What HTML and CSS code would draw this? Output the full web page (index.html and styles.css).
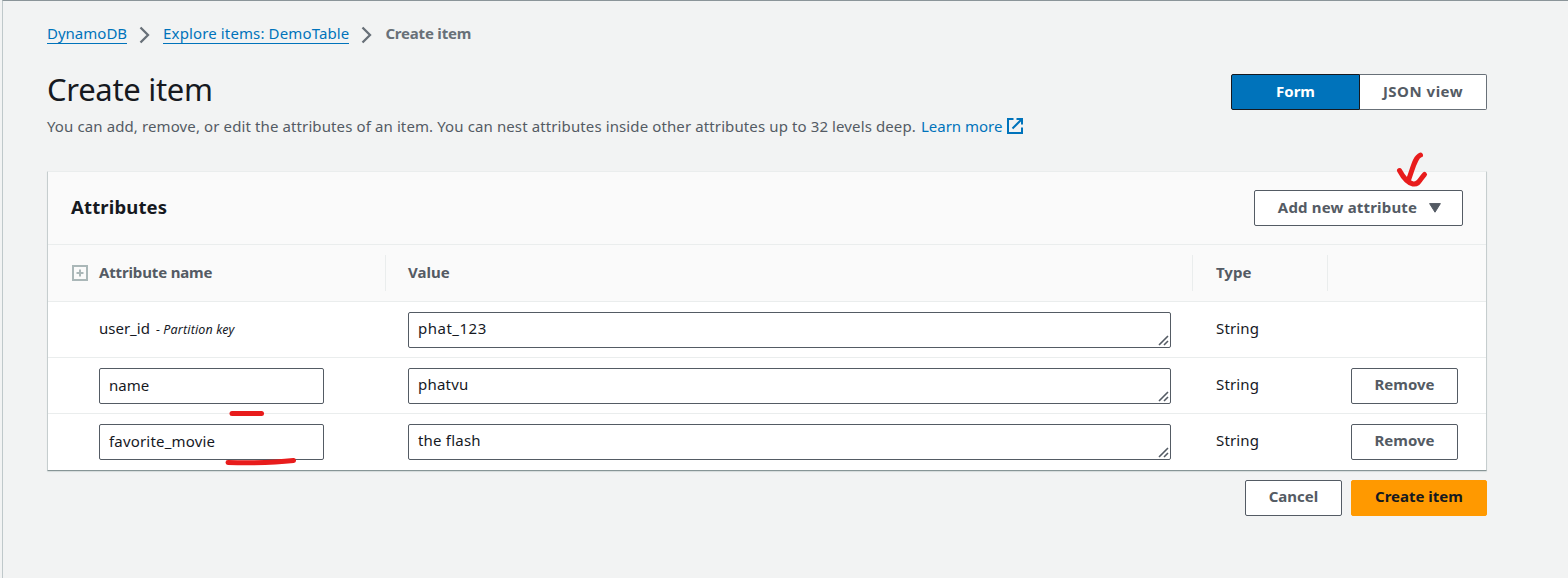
FILE: index.html
```html
<!DOCTYPE html>
<html lang="en">
<head>
<meta charset="utf-8">
<title>Create item</title>
<link rel="stylesheet" href="styles.css">
</head>
<body>
<main class="page">
  <nav class="breadcrumbs">
    <a class="crumb crumb-db">DynamoDB</a>
    <svg class="chevron" width="12" height="18" viewBox="0 0 12 18"><path d="M1.5 1.5L9 9L1.5 16.5"/></svg>
    <a class="crumb crumb-table">Explore items: DemoTable</a>
    <svg class="chevron" width="12" height="18" viewBox="0 0 12 18"><path d="M1.5 1.5L9 9L1.5 16.5"/></svg>
    <span class="crumb-current">Create item</span>
  </nav>
  <header class="page-header">
    <div>
      <h1 class="title">Create item</h1>
      <p class="subtitle"><span class="desc">You can add, remove, or edit the attributes of an item. You can nest attributes inside other attributes up to 32 levels deep.</span><a class="learn">Learn more</a><svg class="external" width="16" height="16" viewBox="0 0 16 16"><path d="M6.500 1H1V15H15V9.500M9.500 1H15V6.500M14.500 1.500L5.500 10.500"/></svg></p>
    </div>
    <div class="segmented">
      <div class="segment segment-active"><span>Form</span></div>
      <div class="segment"><span class="json">JSON view</span></div>
    </div>
  </header>
  <section class="panel">
    <header class="panel-header">
      <h2 class="panel-title">Attributes</h2>
      <div class="button button-add"><span>Add new attribute</span><svg width="12" height="10" viewBox="0 0 12 10"><path d="M.6.6H11.4L6 9.2Z" fill="#545b64" stroke="#545b64" stroke-linejoin="round"/></svg></div>
    </header>
    <div class="row row-head">
      <div class="cell head-name"><svg class="expand" width="16" height="16" viewBox="0 0 16 16"><path d="M1 1H15V15H1ZM8 4.5V11.5M4.5 8H11.5"/></svg><span class="th-name">Attribute name</span></div>
      <div class="cell"><span class="th-value">Value</span></div>
      <div class="cell"><span class="th-type">Type</span></div>
      <div class="cell"></div>
    </div>
    <div class="row">
      <div class="cell cell-name"><span class="key">user_id</span><em class="key-note">- Partition key</em></div>
      <div class="cell"><div class="field area"><span class="spaced">phat_123</span><svg class="grip" width="11" height="11" viewBox="0 0 11 11"><path d="M1 10L10 1M6 10L10 6"/></svg></div></div>
      <div class="cell"><span class="type">String</span></div>
      <div class="cell"></div>
    </div>
    <div class="row">
      <div class="cell cell-name"><div class="field"><span>name</span></div></div>
      <div class="cell"><div class="field area"><span>phatvu</span><svg class="grip" width="11" height="11" viewBox="0 0 11 11"><path d="M1 10L10 1M6 10L10 6"/></svg></div></div>
      <div class="cell"><span class="type">String</span></div>
      <div class="cell"><div class="button button-remove"><span>Remove</span></div></div>
    </div>
    <div class="row row-last">
      <div class="cell cell-name"><div class="field"><span class="movie">favorite_movie</span></div></div>
      <div class="cell"><div class="field area"><span>the flash</span><svg class="grip" width="11" height="11" viewBox="0 0 11 11"><path d="M1 10L10 1M6 10L10 6"/></svg></div></div>
      <div class="cell"><span class="type">String</span></div>
      <div class="cell"><div class="button button-remove"><span>Remove</span></div></div>
    </div>
  </section>
  <footer class="actions">
    <div class="button button-cancel"><span>Cancel</span></div>
    <div class="button button-primary"><span>Create item</span></div>
  </footer>
</main>
<svg class="ink" width="1568" height="578" viewBox="0 0 1568 578">
  <path d="M1420.500 155C1415 157 1413 168 1408.500 180"/>
  <path d="M1399.500 170.500C1403 177 1408 183 1413 184C1419 185 1420 179 1424.500 174.500"/>
  <path d="M232 413.500H261.500"/>
  <path d="M228 462.500C250 463 272 463 293.500 460.500"/>
</svg>
</body>
</html>
```
FILE: styles.css
```css
* { box-sizing: border-box; }
body {
  margin: 0;
  height: 578px;
  overflow: hidden;
  padding-left: 2px;
  background: #f2f3f3;
  font: 15px/22px "Noto Sans", "Open Sans", sans-serif;
  color: #16191f;
}
.page {
  height: 578px;
  padding: 22px 81px 0 44px;
  border-top: 1px solid #8b9599;
  border-left: 1px solid #bfc8ca;
}
span, a { white-space: nowrap; }
h1, h2, p { margin: 0; }
.breadcrumbs { display: flex; align-items: flex-start; height: 49px; }
.crumb { color: #0073bb; height: 21px; line-height: 21px; border-bottom: 1px solid #0073bb; }
.crumb-table { letter-spacing: .13px; }
.crumb-current { color: #687078; font-weight: 700; line-height: 21px; letter-spacing: -.2px; }
.chevron { margin: 3px 12px 0; fill: none; stroke: #687078; stroke-width: 2.3; }
.page-header { display: flex; justify-content: space-between; height: 99px; }
.title { font-size: 31px; line-height: 34px; font-weight: 400; letter-spacing: -.3px; }
.subtitle { display: flex; align-items: center; height: 22px; margin-top: 9px; color: #545b64; }
.desc { letter-spacing: .112px; }
.learn { color: #0073bb; margin-left: 5px; }
.external { margin-left: 5px; fill: none; stroke: #0073bb; stroke-width: 2; }
.segmented { display: flex; height: 36px; margin-top: 2px; font-weight: 700; color: #545b64; }
.segment {
  display: flex;
  justify-content: center;
  width: 127px;
  padding-top: 5px;
  background: #fff;
  border: 1px solid #687078;
  border-left: 0;
  border-radius: 0 2px 2px 0;
}
.json { letter-spacing: .5px; }
.segment-active {
  width: 129px;
  background: #0073bb;
  color: #fff;
  border: 1px solid #16191f;
  border-radius: 2px 0 0 2px;
}
.panel {
  height: 300px;
  background: #fff;
  border: 1px solid #c6cdce;
  border-top-color: #eaeded;
  border-bottom-color: #879596;
  border-radius: 1px;
  box-shadow: 0 1px 1px #d5dbdb;
}
.panel-header {
  display: flex;
  justify-content: space-between;
  height: 73px;
  padding: 18px 23px 0;
  background: #fafafa;
  border-bottom: 1px solid #eaeded;
}
.panel-title { font-size: 18.500px; line-height: 34px; font-weight: 700; letter-spacing: .15px; }
.button {
  display: flex;
  justify-content: center;
  height: 36px;
  padding-top: 5px;
  background: #fff;
  border: 1px solid #545b64;
  border-radius: 2px;
  color: #545b64;
  font-weight: 700;
}
.button-add { width: 209px; padding-left: 2px; letter-spacing: .18px; }
.button-add svg { margin: 7px 0 0 12px; }
.row {
  display: grid;
  grid-template-columns: 338px 807px 135px 158px;
  height: 56px;
  border-bottom: 1px solid #eaeded;
}
.row-last { border-bottom: 0; }
.row-head {
  height: 57px;
  padding: 10px 0;
  background: #fafafa;
  font-weight: 700;
  color: #545b64;
}
.cell { padding: 10px 22px 0 23px; }
.row-head .cell { padding-top: 6px; border-right: 1px solid #eaeded; }
.row-head .cell:last-child { border-right: 0; }
.row-head .head-name { display: flex; padding-left: 24px; }
.th-name { letter-spacing: -.15px; }
.expand { margin: 4px 11px 0 0; fill: none; stroke: #aab7b8; stroke-width: 2; }
.row .cell-name { padding-left: 51px; }
.cell:nth-child(2) { padding-left: 22px; }
.key { line-height: 32px; }
.key-note { font-size: 12.500px; line-height: 32px; margin-left: 6px; letter-spacing: .15px; }
.field {
  display: flex;
  width: 225px;
  height: 36px;
  padding: 5px 9px;
  border: 1px solid #545b64;
  border-radius: 2px;
  background: #fff;
}
.area { width: 763px; justify-content: space-between; padding: 4px 1px 0 9px; letter-spacing: .2px; }
.spaced { letter-spacing: .5px; }
.movie { letter-spacing: .18px; }
.grip { margin-top: 18px; fill: none; stroke: #545b64; stroke-width: 1.600; }
.type { line-height: 32px; letter-spacing: .15px; }
.button-remove { width: 107px; padding-top: 4px; }
.actions { display: flex; justify-content: flex-end; gap: 9px; margin-top: 9px; }
.actions .button { padding-top: 4px; }
.button-cancel { width: 97px; }
.button-primary { width: 136px; background: #ff9900; border-color: #ff9900; color: #16191f; }
.ink {
  position: absolute;
  left: 0;
  top: 0;
  fill: none;
  stroke: #e81c1c;
  stroke-width: 5;
  stroke-linecap: round;
  stroke-linejoin: round;
}
```
